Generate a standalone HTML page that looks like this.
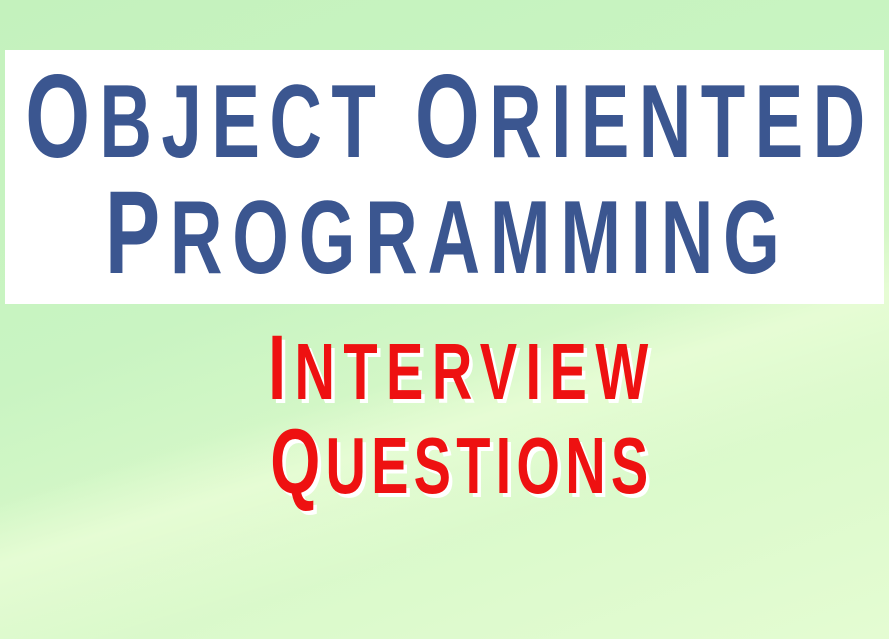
<!DOCTYPE html>
<html><head><style>
html,body{margin:0;padding:0;width:889px;height:639px;overflow:hidden}
body{background:linear-gradient(160deg,#c4f2bd 0%,#c9f4c2 40%,#d6f8c8 60%,#e4fcd2 100%);position:relative}
.band{position:absolute;left:0;top:0;width:889px;height:639px;background:linear-gradient(163deg,rgba(255,255,255,0) 55%,rgba(240,255,220,0.6) 62%,rgba(255,255,255,0) 75%)}
.box{position:absolute;left:5px;top:50px;width:879px;height:254px;background:#fff}
svg{position:absolute;left:0;top:0}
text{font-family:"Liberation Sans",sans-serif;font-weight:bold}
</style></head><body>
<div class="band"></div>
<div class="box"></div>
<svg width="889" height="639">
<g transform="scale(0.7,1)">
<text x="36" y="157" fill="#3b5690" textLength="1200" lengthAdjust="spacing"><tspan font-size="119">O</tspan><tspan font-size="104">BJECT </tspan><tspan font-size="119">O</tspan><tspan font-size="104">RIENTED</tspan></text>
<text x="150" y="273" fill="#3b5690" textLength="964" lengthAdjust="spacing"><tspan font-size="118">P</tspan><tspan font-size="104">ROGRAMMING</tspan></text>
<text x="388" y="403" fill="#fff" textLength="543" lengthAdjust="spacing"><tspan font-size="92">I</tspan><tspan font-size="80">NTERVIEW</tspan></text>
<text x="383" y="399" fill="#ee1111" textLength="543" lengthAdjust="spacing"><tspan font-size="92">I</tspan><tspan font-size="80">NTERVIEW</tspan></text>
<text x="391" y="497" fill="#fff" textLength="540" lengthAdjust="spacing"><tspan font-size="92">Q</tspan><tspan font-size="80">UESTIONS</tspan></text>
<text x="386" y="493" fill="#ee1111" textLength="540" lengthAdjust="spacing"><tspan font-size="92">Q</tspan><tspan font-size="80">UESTIONS</tspan></text>
</g>
</svg>
</body></html>
